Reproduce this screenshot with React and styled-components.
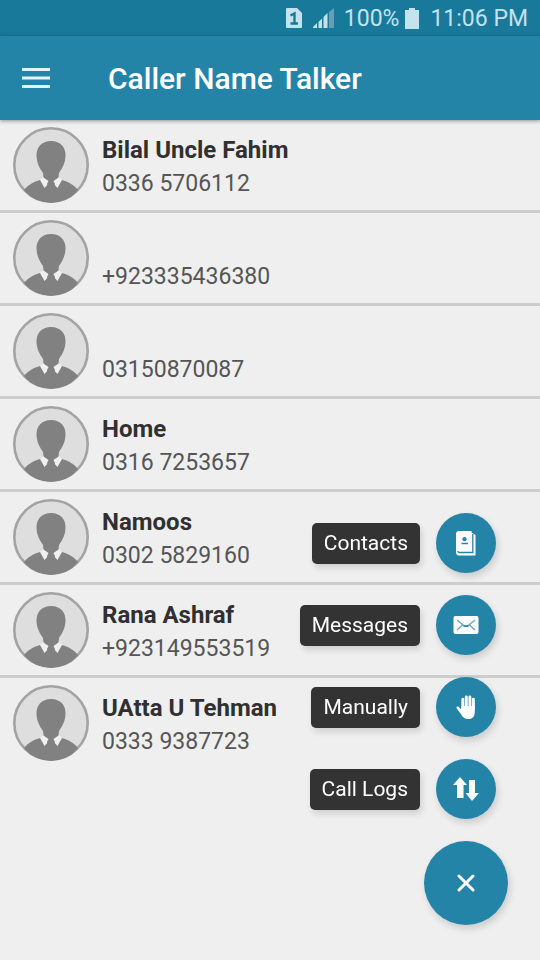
import { useState } from "react"
import styled, { createGlobalStyle } from "styled-components"

const GlobalStyle = createGlobalStyle`
  * {
    box-sizing: border-box;
  }

  body {
    margin: 0;
    background: #efefef;
    font-family: Roboto, "Liberation Sans", sans-serif;
  }
`

const Page = styled.div`
  min-height: 100vh;
  background: #efefef;
`

const StatusBar = styled.div`
  display: flex;
  align-items: center;
  justify-content: flex-end;
  height: 36px;
  padding: 0 12px;
  background: #19799b;
  color: #c3e3ed;
  font-size: 23px;
  line-height: 36px;
`

const StatusIcon = styled.svg`
  display: block;
  margin-right: ${(props) => props.$gap}px;
`

const StatusText = styled.span`
  padding-top: 2px;
`

const Battery = styled(StatusText)`
  margin-right: 6px;
`

const AppBar = styled.header`
  position: relative;
  display: flex;
  align-items: center;
  gap: 58px;
  height: 84px;
  padding: 0 22px;
  background: #2484a8;
  box-shadow: 0 1px 4px rgba(0, 0, 0, 0.4);
`

const MenuButton = styled.button`
  display: flex;
  padding: 0;
  background: none;
  border: none;
  cursor: pointer;
`

const Title = styled.h1`
  margin: 0;
  padding-top: 2px;
  color: white;
  font-size: 30px;
  font-weight: 500;
  line-height: 36px;
`

const CallerList = styled.ul`
  margin: 0;
  padding: 0;
  list-style: none;
`

const CallerRow = styled.li`
  display: flex;
  align-items: center;
  gap: 13px;
  padding: 7px 13px;
  border-bottom: 3px solid #cdcdcd;

  &:last-child {
    border-bottom: none;
  }
`

const AvatarImage = styled.svg`
  display: block;
  flex: none;
`

const CallerText = styled.div`
  padding-top: 4px;
`

const CallerName = styled.div`
  min-height: 33px;
  color: #303030;
  font-size: 24px;
  font-weight: 700;
  line-height: 33px;
`

const CallerNumber = styled.div`
  color: #555;
  font-size: 23px;
  line-height: 33px;
`

const FabMenu = styled.div`
  position: fixed;
  right: 32px;
  bottom: 35px;
  display: flex;
  flex-direction: column;
  align-items: flex-end;
  gap: 22px;
`

const ActionList = styled.ul`
  display: flex;
  flex-direction: column;
  gap: 22px;
  margin: 0;
  padding: 0 12px;
  list-style: none;
`

const ActionItem = styled.li`
  display: flex;
  align-items: center;
  justify-content: flex-end;
  gap: 16px;
`

const ActionLabel = styled.label`
  padding: 4px 12px;
  background: #333;
  border-radius: 5px;
  box-shadow: 2px 4px 6px rgba(0, 0, 0, 0.13);
  color: white;
  font-size: 21px;
  line-height: 33px;
  cursor: pointer;
`

const Fab = styled.button`
  display: flex;
  align-items: center;
  justify-content: center;
  width: ${(props) => (props.$mini ? 60 : 84)}px;
  height: ${(props) => (props.$mini ? 60 : 84)}px;
  padding: 0;
  background: #2484a8;
  border: none;
  border-radius: 50%;
  box-shadow: 2px 4px 7px rgba(0, 0, 0, 0.15);
  cursor: pointer;
`

const callers = [
  { name: "Bilal Uncle Fahim", number: "0336 5706112" },
  { name: "", number: "+923335436380" },
  { name: "", number: "03150870087" },
  { name: "Home", number: "0316 7253657" },
  { name: "Namoos", number: "0302 5829160" },
  { name: "Rana Ashraf", number: "+923149553519" },
  { name: "UAtta U Tehman", number: "0333 9387723" },
]

const Avatar = ({ id }) => (
  <AvatarImage width="76" height="76" viewBox="0 0 76 76" aria-hidden="true">
    <clipPath id={id}>
      <circle cx="38" cy="38" r="38" />
    </clipPath>
    <circle cx="38" cy="38" r="36.700" fill="#dedede" stroke="#a3a3a3" strokeWidth="2.600" />
    <g clipPath={`url(#${id})`} fill="#818181">
      <path d="M11 63C15 58 21 54.500 27 53L49 53C55 54.500 61 58 65 63C59 71 49 76 38 76S17 71 11 63Z" />
      <path d="M30 50L46 50L49 53L44.500 61L38 54L31.500 61L27 53Z" fill="#f0f0f0" />
      <path d="M38 14C47.500 14 53 20.500 52.500 29C52.200 36 49.500 41 46 46L45.500 50.500L40.500 54L42 57L41 61L45 66L31 66L35 61L34 57L35.500 54L30.500 50.500L30 46C26.500 41 23.800 36 23.500 29C23.200 20.500 28.500 14 38 14Z" />
    </g>
  </AvatarImage>
)

const ContactsIcon = () => (
  <svg width="20" height="25" viewBox="0 0 20 25" aria-hidden="true">
    <path d="M3 0H15.500V1.500L19.500 4V24.500H3C1.200 24.500 0 23.200 0 21.500V3C0 1.200 1.200 0 3 0Z" fill="white" />
    <path d="M16.800 3V21.500H3.500C2.500 21.500 2 20.800 2 20" fill="none" stroke="#2484a8" strokeWidth="1.300" />
    <circle cx="8.500" cy="8.200" r="2.100" fill="#2484a8" />
    <path d="M5.500 12.500H12" stroke="#2484a8" strokeWidth="1.500" />
  </svg>
)

const MessagesIcon = () => (
  <svg width="26" height="18" viewBox="0 0 26 18" aria-hidden="true">
    <rect width="25" height="18" x=".5" rx="2" fill="white" />
    <path d="M4 4L10.500 9.300Q13 11.200 15.500 9.300L22 4M4 14L9.500 9M22 14L16.500 9" fill="none" stroke="#6faac2" strokeWidth="1.500" />
    <path d="M10.500 9.300Q13 11.200 15.500 9.300" fill="none" stroke="#2484a8" strokeWidth="1.600" />
  </svg>
)

const HandIcon = () => (
  <svg width="20" height="24" viewBox="0 0 20 24" aria-hidden="true">
    <path
      d="M6.800 15V4.200M10.300 13V2M13.900 13V2M17.400 14V4.200"
      fill="none"
      stroke="white"
      strokeWidth="2.900"
      strokeLinecap="round"
    />
    <path d="M5.400 11H18.800V17C18.800 21.500 16.500 24 12.500 24C9 24 7 22.500 5 19.200L.8 13.500C-.1 12.200 1.200 10.800 2.700 12L5.400 14.500Z" fill="white" />
  </svg>
)

const CallLogsIcon = () => (
  <svg width="26" height="24" viewBox="0 0 26 24" fill="white" aria-hidden="true">
    <path d="M7 0L14 8H10.500V21H4V8H0Z" />
    <path d="M16 3H22V16H26L19 24L12.500 16H16Z" />
  </svg>
)

const actions = [
  { id: "contacts", label: "Contacts", Icon: ContactsIcon },
  { id: "messages", label: "Messages", Icon: MessagesIcon },
  { id: "manually", label: "Manually", Icon: HandIcon },
  { id: "call-logs", label: "Call Logs", Icon: CallLogsIcon },
]

const App = () => {
  const [menuOpen, setMenuOpen] = useState(true)

  return (
    <Page>
      <GlobalStyle />
      <StatusBar>
        <StatusIcon $gap={11} width="16" height="20" viewBox="0 0 16 20" aria-hidden="true">
          <path d="M1 0H11L16 5V19Q16 20 15 20H1Q0 20 0 19V1Q0 0 1 0Z" fill="#c3e3ed" />
          <path d="M4.500 7.500L8.500 5.500V15M4.500 15.500H12" fill="none" stroke="#19799b" strokeWidth="2.400" />
        </StatusIcon>
        <StatusIcon $gap={9} width="22" height="20" viewBox="0 0 22 20" aria-hidden="true">
          <path d="M0 20V19L4 15V20ZM5.500 20V14L9 10.500V20ZM10.500 20V9L14.500 5V20Z" fill="#c3e3ed" />
          <path d="M16 20V4L21 0V20Z" fill="#659fb5" />
        </StatusIcon>
        <Battery>100%</Battery>
        <StatusIcon $gap={11} width="14" height="21" viewBox="0 0 14 21" aria-hidden="true">
          <path d="M4 0H10V2H14V21H0V2H4Z" fill="#c3e3ed" />
        </StatusIcon>
        <StatusText>11:06 PM</StatusText>
      </StatusBar>

      <AppBar>
        <MenuButton aria-label="Open navigation">
          <svg width="28" height="20" viewBox="0 0 28 20" aria-hidden="true">
            <path d="M0 1.500H28M0 10H28M0 18.500H28" stroke="#e4f3f8" strokeWidth="3" />
          </svg>
        </MenuButton>
        <Title>Caller Name Talker</Title>
      </AppBar>

      <CallerList>
        {callers.map((caller, index) => (
          <CallerRow key={caller.number}>
            <Avatar id={`avatar-${index}`} />
            <CallerText>
              <CallerName>{caller.name}</CallerName>
              <CallerNumber>{caller.number}</CallerNumber>
            </CallerText>
          </CallerRow>
        ))}
      </CallerList>

      <FabMenu>
        {menuOpen && (
          <ActionList>
            {actions.map(({ id, label, Icon }) => (
              <ActionItem key={id}>
                <ActionLabel htmlFor={id}>{label}</ActionLabel>
                <Fab id={id} $mini>
                  <Icon />
                </Fab>
              </ActionItem>
            ))}
          </ActionList>
        )}
        <Fab
          aria-label={menuOpen ? "Close menu" : "Open menu"}
          aria-expanded={menuOpen}
          onClick={() => setMenuOpen(!menuOpen)}
        >
          <svg width="18" height="18" viewBox="0 0 18 18" aria-hidden="true">
            <path d="M2 2L16 16M16 2L2 16" stroke="white" strokeWidth="3" strokeLinecap="round" />
          </svg>
        </Fab>
      </FabMenu>
    </Page>
  )
}

export default App
